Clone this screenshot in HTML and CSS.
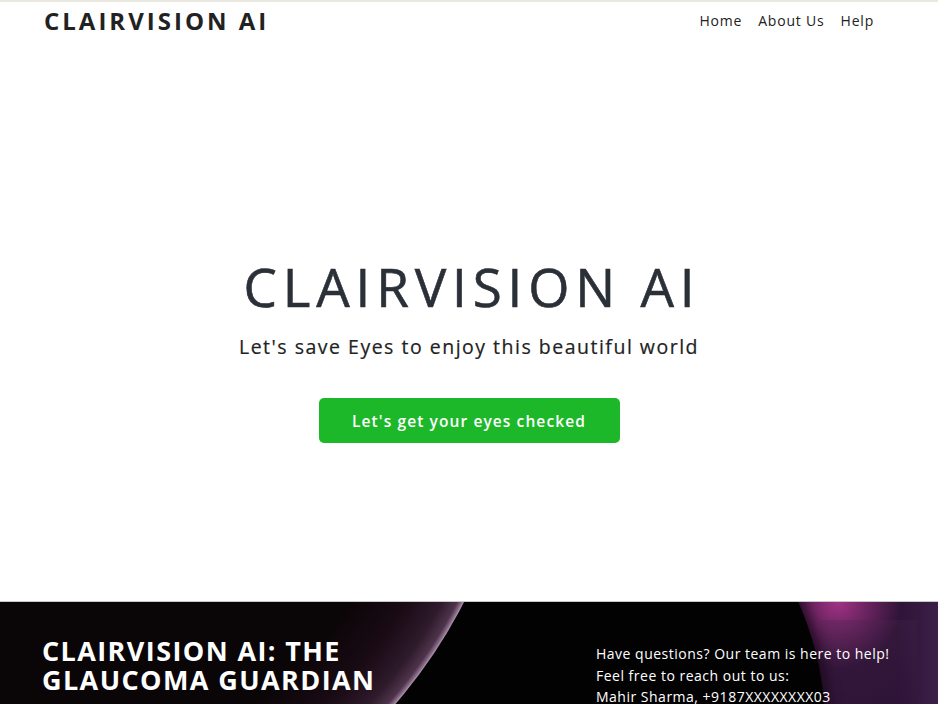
FILE: index.html
```html
<!DOCTYPE html>
<html lang="en">
<head>
<meta charset="utf-8">
<title>ClairVision AI</title>
<link rel="stylesheet" href="styles.css">
</head>
<body>
<header class="topbar">
  <div class="brand">CLAIRVISION AI</div>
  <nav class="nav">
    <a href="#">Home</a>
    <a href="#">About Us</a>
    <a href="#">Help</a>
  </nav>
</header>
<main class="hero">
  <h1 class="hero-title">CLAIRVISION AI</h1>
  <p class="hero-sub">Let's save Eyes to enjoy this beautiful world</p>
  <a class="cta" href="#">Let's get your eyes checked</a>
</main>
<footer class="footer">
  <div class="glow"></div>
  <div class="panel"></div>
  <div class="planet-right"></div>
  <div class="planet-left"></div>
  <div class="footer-inner">
    <h2 class="footer-title">CLAIRVISION AI: THE<br>GLAUCOMA GUARDIAN</h2>
    <div class="contact">
      <p>Have questions? Our team is here to help!</p>
      <p>Feel free to reach out to us:</p>
      <p>Mahir Sharma, +9187XXXXXXXX03</p>
    </div>
  </div>
</footer>
</body>
</html>
```
FILE: styles.css
```css
* { box-sizing: border-box; }
html, body { margin: 0; padding: 0; }
body {
  font-family: "Open Sans", "Noto Sans", sans-serif;
  background: #fff;
  color: #212529;
  border-top: 2px solid #ebe8df;
  height: 704px;
  overflow: hidden;
}
.topbar {
  height: 36px;
  display: flex;
  align-items: center;
  justify-content: space-between;
  padding: 0 64px 0 44px;
}
.brand {
  font-weight: 700;
  font-size: 24px;
  letter-spacing: 3px;
  color: #222;
}
.nav { display: flex; gap: 16px; }
.nav a {
  color: #222;
  text-decoration: none;
  font-size: 14px;
  letter-spacing: 0.8px;
}
.hero {
  height: 563px;
  display: flex;
  flex-direction: column;
  align-items: center;
  padding-top: 214px;
}
.hero-title {
  margin: 0;
  font-size: 53px;
  font-weight: 400;
  color: #2b3038;
  letter-spacing: 5.8px;
  line-height: 70px;
  padding-left: 6px;
  -webkit-text-stroke: 0.6px #2b3038;
}
.hero-sub {
  margin: 11px 0 0;
  font-size: 19.5px;
  line-height: 28px;
  color: #222;
  letter-spacing: 1.5px;
  -webkit-text-stroke: 0.2px #222;
}
.cta {
  margin-top: 37px;
  width: 301px;
  height: 45px;
  background: #1db82a;
  border-radius: 5px;
  color: #fff;
  font-weight: 600;
  font-size: 15.5px;
  letter-spacing: 1.1px;
  text-decoration: none;
  display: flex;
  align-items: center;
  justify-content: center;
}
.footer {
  position: relative;
  height: 103px;
  background: linear-gradient(180deg, #150b0d 0%, #060304 25%, #030203 60%);
  border-top: 1px solid #c8c8c8;
  overflow: hidden;
  color: #fff;
}
.glow {
  position: absolute;
  right: 0;
  top: 0;
  width: 200px;
  height: 103px;
  background:
    radial-gradient(ellipse at 50% 0%, rgba(200, 60, 160, 0.75), rgba(120, 30, 100, 0) 45%),
    linear-gradient(90deg, #2a1234 0%, #2d1436 80%, #3c1f48 100%);
}
.panel {
  position: absolute;
  left: 820px;
  top: 18px;
  width: 97px;
  height: 90px;
  background: linear-gradient(150deg, rgba(80, 38, 82, 0.35), rgba(40, 16, 50, 0.15));
}
.planet-right {
  position: absolute;
  left: 215px;
  top: -180px;
  width: 610px;
  height: 610px;
  border-radius: 50%;
  background: #030203;
  box-shadow: 0 0 14px 4px rgba(20, 5, 20, 0.8);
}
.planet-left {
  position: absolute;
  left: -482px;
  top: -726px;
  width: 1000px;
  height: 1000px;
  border-radius: 50%;
  background: radial-gradient(circle closest-side at 50% 50%, #0a0507 80%, #1a0b15 90%, #2e1a2b 96%, #4e344b 98.8%, #8a6c88 99.6%, #b599b3 100%);
}
.footer-inner {
  position: relative;
  display: flex;
  justify-content: space-between;
  padding: 34px 42px 0 42px;
}
.footer-title {
  margin: 0;
  font-size: 27px;
  font-weight: 700;
  line-height: 29px;
  letter-spacing: 1.4px;
}
.contact { padding-top: 7px; width: 300px; }
.contact p {
  margin: 0;
  font-size: 14px;
  line-height: 21.5px;
  letter-spacing: 0.5px;
  white-space: nowrap;
}
```
